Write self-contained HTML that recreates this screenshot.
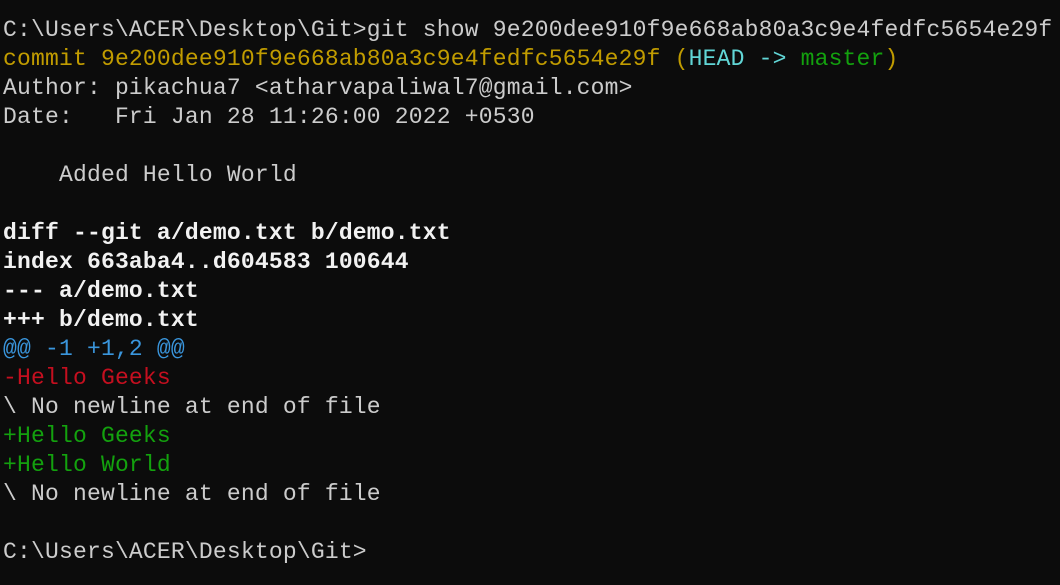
<!DOCTYPE html>
<html><head><meta charset="utf-8"><style>
html,body{margin:0;padding:0;background:#0c0c0c;width:1060px;height:585px;overflow:hidden}
pre{margin:0;padding:16px 0 0 3px;font-family:"Liberation Mono",monospace;font-size:23px;letter-spacing:0.19px;line-height:29px;color:#cccccc;white-space:pre}
.y{color:#c19c00}.c{color:#61d6d6}.g{color:#13a10e}.r{color:#c50f1f}.b{color:#3a96dd}.w{color:#f2f2f2;font-weight:bold}
</style></head><body><pre>C:\Users\ACER\Desktop\Git&gt;git show 9e200dee910f9e668ab80a3c9e4fedfc5654e29f
<span class="y">commit 9e200dee910f9e668ab80a3c9e4fedfc5654e29f (</span><span class="c">HEAD -&gt; </span><span class="g">master</span><span class="y">)</span>
Author: pikachua7 &lt;atharvapaliwal7@gmail.com&gt;
Date:   Fri Jan 28 11:26:00 2022 +0530

    Added Hello World

<span class="w">diff --git a/demo.txt b/demo.txt</span>
<span class="w">index 663aba4..d604583 100644</span>
<span class="w">--- a/demo.txt</span>
<span class="w">+++ b/demo.txt</span>
<span class="b">@@ -1 +1,2 @@</span>
<span class="r">-Hello Geeks</span>
\ No newline at end of file
<span class="g">+Hello Geeks</span>
<span class="g">+Hello World</span>
\ No newline at end of file

C:\Users\ACER\Desktop\Git&gt;</pre></body></html>
